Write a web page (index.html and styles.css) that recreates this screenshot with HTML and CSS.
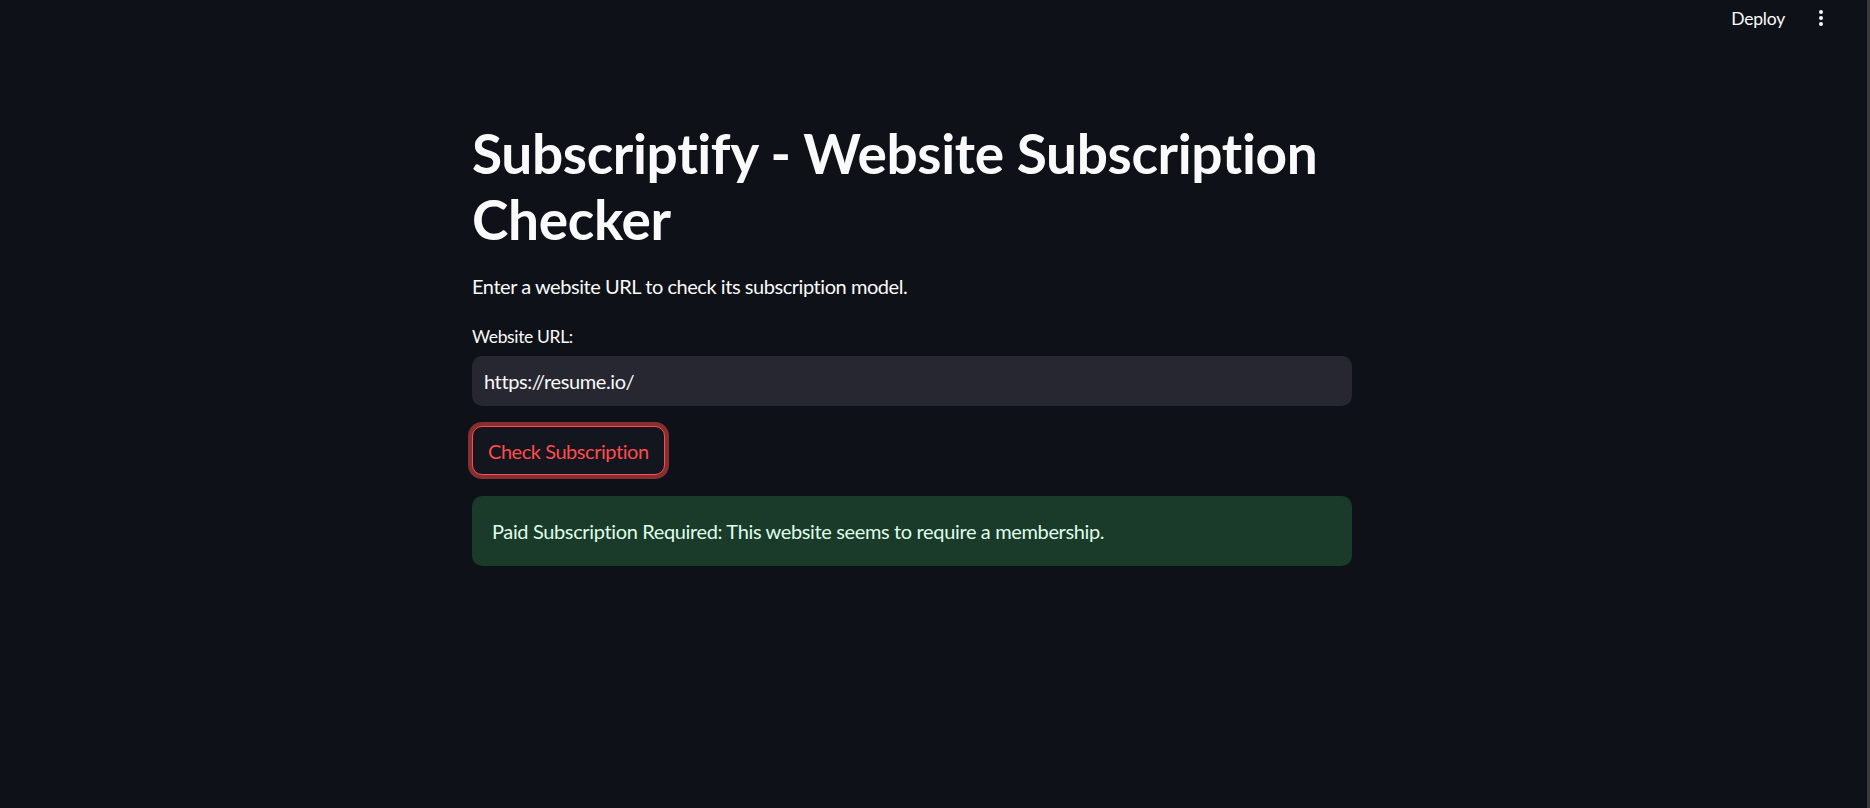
FILE: index.html
```html
<!DOCTYPE html>
<html lang="en">
<head>
<meta charset="utf-8">
<title>Subscriptify</title>
<link rel="stylesheet" href="styles.css">
</head>
<body>
<div class="app">
  <div class="viewport">
    <header class="topbar">
      <span class="deploy">Deploy</span>
      <span class="menu" aria-label="Main menu">
        <svg width="4" height="16" viewBox="0 0 4 16"><circle cx="2" cy="2" r="2" fill="#fafafa"/><circle cx="2" cy="8" r="2" fill="#fafafa"/><circle cx="2" cy="14" r="2" fill="#fafafa"/></svg>
      </span>
    </header>
    <main class="block">
      <h1 class="title">Subscriptify - Website Subscription Checker</h1>
      <p class="intro">Enter a website URL to check its subscription model.</p>
      <label class="label" for="url">Website URL:</label>
      <div class="input-wrap"><input id="url" class="input" type="text" value="https://resume.io/"></div>
      <div class="btn-row"><button class="btn">Check Subscription</button></div>
      <div class="alert">Paid Subscription Required: This website seems to require a membership.</div>
    </main>
  </div>
  <div class="edge"></div>
</div>
</body>
</html>
```
FILE: styles.css
```css
html, body {
  margin: 0;
  padding: 0;
  height: 100%;
  background: #0e1117;
}
body {
  font-family: "Lato", "Source Sans Pro", sans-serif;
  color: #fafafa;
}
.app {
  display: flex;
  height: 808px;
}
.viewport {
  flex: 1;
  display: flex;
  flex-direction: column;
}
.edge {
  width: 3px;
  background: #3a3a3a;
}
.topbar {
  height: 36px;
  display: flex;
  align-items: center;
  justify-content: flex-end;
  gap: 34px;
  padding-right: 44px;
}
.deploy {
  font-size: 17.5px;
  color: #fafafa;
  letter-spacing: -0.2px;
}
.menu {
  display: flex;
  align-items: center;
  height: 16px;
}
.menu svg { display: block; }
.block {
  width: 880px;
  margin-left: 472px;
  padding-top: 84px;
  display: flex;
  flex-direction: column;
}
.title {
  margin: 0;
  font-size: 55px;
  line-height: 66px;
  font-weight: 700;
  letter-spacing: -0.35px;
}
.intro {
  margin: 18px 0 0;
  font-size: 20px;
  line-height: 32px;
  letter-spacing: -0.45px;
}
.label {
  margin-top: 21px;
  font-size: 17.5px;
  line-height: 28px;
  letter-spacing: -0.35px;
}
.input-wrap {
  margin-top: 5px;
}
.input {
  box-sizing: border-box;
  width: 100%;
  height: 50px;
  border: none;
  border-radius: 10px;
  background: #262730;
  color: #fafafa;
  font-family: inherit;
  font-size: 20px;
  letter-spacing: -0.4px;
  padding: 0 12px;
  outline: none;
}
.btn-row {
  margin-top: 20px;
  display: flex;
}
.btn {
  box-sizing: border-box;
  height: 49px;
  border: 1px solid #ff4b4b;
  border-radius: 10px;
  background: #13161e;
  color: #ff4b4b;
  font-family: inherit;
  font-size: 20px;
  letter-spacing: -0.45px;
  white-space: nowrap;
  box-shadow: 0 0 0 4px rgba(255, 75, 75, 0.5);
  padding: 0 15px;
}
.alert {
  margin-top: 21px;
  height: 70px;
  box-sizing: border-box;
  display: flex;
  align-items: center;
  padding: 0 20px;
  border-radius: 10px;
  background: #1a3a2a;
  color: #dffde9;
  font-size: 20px;
  letter-spacing: -0.36px;
}
```
